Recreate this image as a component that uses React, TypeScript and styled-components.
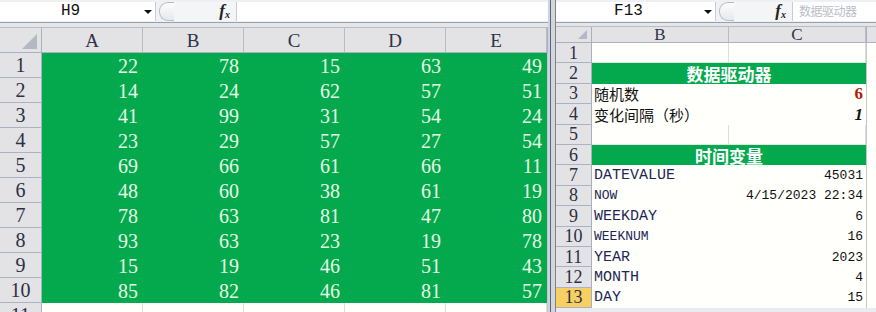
import React from 'react';
import styled, { createGlobalStyle } from 'styled-components';

const Global = createGlobalStyle`
  html, body {
    margin: 0;
    padding: 0;
    background: #e9ebee;
    overflow: hidden;
  }
`;

const Screen = styled.div`
  display: flex;
  width: 876px;
  height: 312px;
  overflow: hidden;
  background: #e9ebee;
`;

const Pane = styled.div<{ $width: number }>`
  display: flex;
  flex-direction: column;
  width: ${p => p.$width}px;
  flex-shrink: 0;
  overflow: hidden;

  & > * {
    flex-shrink: 0;
  }
`;

const Divider = styled.div`
  width: 8px;
  flex-shrink: 0;
  background: linear-gradient(90deg, #c9d5e6 0, #c9d5e6 2px, #5f6670 2px, #5f6670 3px, #d4d6da 3px, #d4d6da 7px, #7d838c 7px);
`;

const FormulaBar = styled.div`
  display: flex;
  align-items: center;
  height: 22px;
  border-bottom: 1px solid #9aa0a8;
  background: #eef0f3;
`;

const NameBox = styled.div<{ $width: number }>`
  position: relative;
  display: flex;
  align-items: center;
  justify-content: center;
  width: ${p => p.$width}px;
  height: 19px;
  background: #fff;
  border-right: 1px solid #c9ccd2;
  font-family: "Liberation Mono", monospace;
  font-size: 16px;
  line-height: 1;
  color: #111;
  padding-right: 14px;
  box-sizing: border-box;
`;

const Arrow = styled.span`
  position: absolute;
  right: 3px;
  top: 8px;
  width: 0;
  height: 0;
  border-left: 4px solid transparent;
  border-right: 4px solid transparent;
  border-top: 4px solid #111;
`;

const Pill = styled.div`
  width: 14px;
  height: 17px;
  margin-left: 3px;
  border: 1px solid #b8bcc4;
  border-right: none;
  border-radius: 9px 0 0 9px;
  background: linear-gradient(#fdfdfd, #e6e8ec);
`;

const FxZone = styled.div<{ $width: number }>`
  display: flex;
  align-items: center;
  justify-content: flex-end;
  width: ${p => p.$width}px;
  height: 19px;
  padding-right: 6px;
  box-sizing: border-box;
  background: #f4f5f7;
`;

const Fx = styled.span`
  font-family: "Liberation Serif", serif;
  font-style: italic;
  font-weight: bold;
  font-size: 17px;
  line-height: 1;
  color: #222;
  sub {
    font-size: 10px;
    vertical-align: -2px;
  }
`;

const FormulaInput = styled.div`
  flex: 1;
  height: 19px;
  background: #fff;
  border-left: 1px solid #c9ccd2;
  display: flex;
  align-items: center;
  padding-left: 6px;
  font-family: "Noto Sans CJK SC", sans-serif;
  font-size: 12px;
  line-height: 1;
  color: #b9bec6;
  letter-spacing: -0.5px;
`;

const Gap = styled.div<{ $height: number }>`
  height: ${p => p.$height}px;
  background: #e4e6e9;
  border-bottom: 1px solid #b8bcc3;
`;

const Grid = styled.div<{ $cols: string; $rows: string }>`
  display: grid;
  grid-template-columns: ${p => p.$cols};
  grid-template-rows: ${p => p.$rows};
  background: #fff;
  line-height: 1;
`;

const Corner = styled.div`
  position: relative;
  background: #e3e3e6;
  border-right: 1px solid #a9b0be;
  border-bottom: 1px solid #a9b0be;
`;

const CornerMark = styled.span<{ $size: number }>`
  position: absolute;
  right: 4px;
  bottom: 3px;
  width: 0;
  height: 0;
  border-left: ${p => p.$size}px solid transparent;
  border-bottom: ${p => p.$size}px solid #b4b8c2;
`;

const ColHead = styled.div<{ $size: number }>`
  display: flex;
  align-items: center;
  justify-content: center;
  background: #e3e3e6;
  border-right: 1px solid #b9bcc4;
  border-bottom: 1px solid #a9b0be;
  font-family: "Liberation Serif", serif;
  font-size: ${p => p.$size}px;
  color: #303246;
`;

const RowHead = styled.div<{ $size: number; $active?: boolean }>`
  display: flex;
  align-items: center;
  justify-content: center;
  background: ${p => (p.$active ? '#f7cf62' : '#e3e3e6')};
  border-right: 1px solid #a9b0be;
  border-bottom: 1px solid #aab2c4;
  font-family: "Liberation Serif", serif;
  font-size: ${p => p.$size}px;
  color: #2d2f44;
`;

const GreenCell = styled.div`
  display: flex;
  align-items: center;
  justify-content: flex-end;
  padding-right: 5px;
  background: #04a94e;
  font-family: "Liberation Serif", serif;
  font-size: 20px;
  color: #e6fbe4;
`;

const BlankCell = styled.div`
  background: #fffffb;
  border-right: 1px solid #dedede;
  border-bottom: 1px solid #e4e4e4;
`;

const Banner = styled.div`
  grid-column: span 2;
  display: flex;
  align-items: center;
  justify-content: center;
  background: #04a94e;
  font-family: "Noto Sans CJK SC", sans-serif;
  font-weight: bold;
  font-size: 17px;
  color: #fff;
`;

const Label = styled.div<{ $size?: number; $cjk?: boolean }>`
  display: flex;
  align-items: center;
  min-width: 0;
  padding-left: 2px;
  white-space: nowrap;
  background: #fffffb;
  font-family: ${p => (p.$cjk ? '"Noto Sans CJK SC", sans-serif' : '"Liberation Mono", monospace')};
  font-size: ${p => p.$size ?? 15}px;
  color: ${p => (p.$cjk ? '#111' : '#1d2757')};
`;

const Value = styled.div<{ $tone?: 'red' | 'italic' }>`
  display: flex;
  align-items: center;
  justify-content: flex-end;
  padding-right: 3px;
  white-space: nowrap;
  background: #fffffb;
  font-family: ${p => (p.$tone ? '"Liberation Serif", serif' : '"Liberation Mono", monospace')};
  font-size: ${p => (p.$tone ? 17 : 13)}px;
  font-weight: ${p => (p.$tone ? 'bold' : 'normal')};
  font-style: ${p => (p.$tone === 'italic' ? 'italic' : 'normal')};
  color: ${p => (p.$tone === 'red' ? '#b01c0c' : '#111')};
`;

const Edge = styled.div`
  background: #fffffb;
  border-left: 1px solid #c4c8ce;
`;

const EdgeHead = styled.div`
  background: #e3e3e6;
  border-left: 1px solid #a9b0be;
  border-bottom: 1px solid #a9b0be;
`;

const leftData = [
  [22, 78, 15, 63, 49],
  [14, 24, 62, 57, 51],
  [41, 99, 31, 54, 24],
  [23, 29, 57, 27, 54],
  [69, 66, 61, 66, 11],
  [48, 60, 38, 61, 19],
  [78, 63, 81, 47, 80],
  [93, 63, 23, 19, 78],
  [15, 19, 46, 51, 43],
  [85, 82, 46, 81, 57],
];

type RightRow =
  | { kind: 'blank' }
  | { kind: 'banner'; text: string }
  | { kind: 'pair'; label: string; value: string; cjk?: boolean; size?: number; tone?: 'red' | 'italic' };

const rightRows: RightRow[] = [
  { kind: 'blank' },
  { kind: 'banner', text: '数据驱动器' },
  { kind: 'pair', label: '随机数', value: '6', cjk: true, size: 15, tone: 'red' },
  { kind: 'pair', label: '变化间隔（秒）', value: '1', cjk: true, size: 15, tone: 'italic' },
  { kind: 'blank' },
  { kind: 'banner', text: '时间变量' },
  { kind: 'pair', label: 'DATEVALUE', value: '45031' },
  { kind: 'pair', label: 'NOW', value: '4/15/2023 22:34', size: 13 },
  { kind: 'pair', label: 'WEEKDAY', value: '6' },
  { kind: 'pair', label: 'WEEKNUM', value: '16', size: 13 },
  { kind: 'pair', label: 'YEAR', value: '2023' },
  { kind: 'pair', label: 'MONTH', value: '4' },
  { kind: 'pair', label: 'DAY', value: '15' },
];

const LeftSheet = () => (
  <Pane $width={548}>
    <FormulaBar>
      <NameBox $width={156}>
        H9
        <Arrow />
      </NameBox>
      <Pill />
      <FxZone $width={62}>
        <Fx>
          f<sub>x</sub>
        </Fx>
      </FxZone>
      <FormulaInput />
    </FormulaBar>
    <Gap $height={4} />
    <Grid $cols="42px repeat(5, 101px) 1fr" $rows="25px repeat(11, 25px)">
      <Corner>
        <CornerMark $size={15} />
      </Corner>
      {['A', 'B', 'C', 'D', 'E'].map(c => (
        <ColHead key={c} $size={19}>
          {c}
        </ColHead>
      ))}
      <EdgeHead />
      {leftData.map((row, i) => (
        <React.Fragment key={i}>
          <RowHead $size={20}>{i + 1}</RowHead>
          {row.map((n, j) => (
            <GreenCell key={j}>{n}</GreenCell>
          ))}
          <Edge />
        </React.Fragment>
      ))}
      <RowHead $size={20}>11</RowHead>
      {[0, 1, 2, 3, 4].map(j => (
        <BlankCell key={j} />
      ))}
      <Edge />
    </Grid>
  </Pane>
);

const RightSheet = () => (
  <Pane $width={320}>
    <FormulaBar>
      <NameBox $width={160}>
        F13
        <Arrow />
      </NameBox>
      <Pill />
      <FxZone $width={58}>
        <Fx>
          f<sub>x</sub>
        </Fx>
      </FxZone>
      <FormulaInput>数据驱动器</FormulaInput>
    </FormulaBar>
    <Gap $height={3} />
    <Grid $cols="36px 137px 137px 1fr" $rows="16px repeat(13, 20.4px)">
      <Corner>
        <CornerMark $size={9} />
      </Corner>
      <ColHead $size={17}>B</ColHead>
      <ColHead $size={17}>C</ColHead>
      <EdgeHead />
      {rightRows.map((row, i) => (
        <React.Fragment key={i}>
          <RowHead $size={18} $active={i === 12}>
            {i + 1}
          </RowHead>
          {row.kind === 'blank' && (
            <>
              <BlankCell />
              <BlankCell />
            </>
          )}
          {row.kind === 'banner' && <Banner>{row.text}</Banner>}
          {row.kind === 'pair' && (
            <>
              <Label $cjk={row.cjk} $size={row.size}>
                {row.label}
              </Label>
              <Value $tone={row.tone}>{row.value}</Value>
            </>
          )}
          <Edge />
        </React.Fragment>
      ))}
    </Grid>
  </Pane>
);

export default function App() {
  return (
    <>
      <Global />
      <Screen>
        <LeftSheet />
        <Divider />
        <RightSheet />
      </Screen>
    </>
  );
}
